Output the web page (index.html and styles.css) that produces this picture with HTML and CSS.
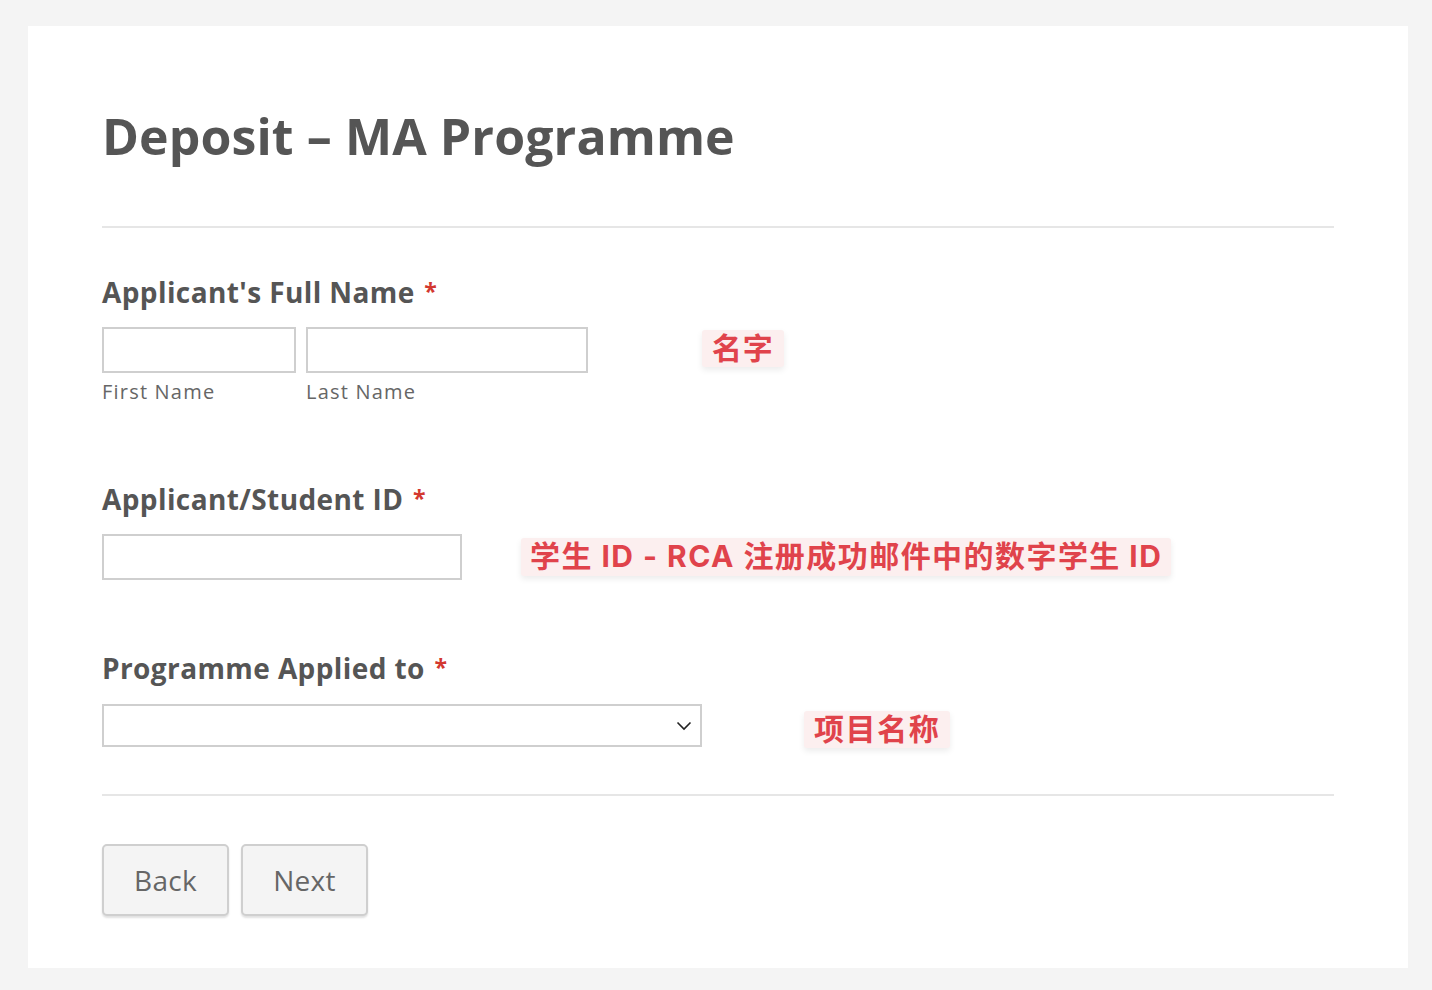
FILE: index.html
```html
<!DOCTYPE html>
<html lang="en">
<head>
<meta charset="utf-8">
<title>Deposit - MA Programme</title>
<link rel="stylesheet" href="styles.css">
</head>
<body>
<main class="card">
  <header class="form-header">
    <h1 class="form-title">Deposit – MA Programme</h1>
  </header>

  <section class="field field--name">
    <label class="field-label">Applicant's Full Name <span class="req">*</span></label>
    <div class="field-row">
      <div class="name-part">
        <input class="text-input text-input--first" type="text">
        <span class="sub-label">First Name</span>
      </div>
      <div class="name-part">
        <input class="text-input text-input--last" type="text">
        <span class="sub-label">Last Name</span>
      </div>
      <span class="note note--name">名字</span>
    </div>
  </section>

  <section class="field field--id">
    <label class="field-label">Applicant/Student ID <span class="req">*</span></label>
    <div class="field-row field-row--center">
      <input class="text-input text-input--id" type="text">
      <span class="note note--id">学生 ID - RCA 注册成功邮件中的数字学生 ID</span>
    </div>
  </section>

  <section class="field field--prog">
    <label class="field-label">Programme Applied to <span class="req">*</span></label>
    <div class="field-row field-row--center">
      <div class="select-box">
        <svg class="chevron" width="16" height="10" viewBox="0 0 16 10"><path d="M1.5 1.5 L8 8 L14.5 1.5" fill="none" stroke="#222" stroke-width="1.6"/></svg>
      </div>
      <span class="note note--prog">项目名称</span>
    </div>
  </section>

  <footer class="form-footer">
    <button class="btn" type="button">Back</button>
    <button class="btn" type="button">Next</button>
  </footer>
</main>
</body>
</html>
```

FILE: styles.css
```css
* { box-sizing: border-box; }

html, body {
  margin: 0;
  background: #f4f4f4;
}

body {
  padding: 26px 24px 22px 28px;
  font-family: "Open Sans", "DejaVu Sans", sans-serif;
  color: #555;
}

.card {
  background: #fff;
  height: 942px;
  padding: 0 74px;
}

.form-header {
  padding: 80px 0 60px;
  border-bottom: 2px solid #e6e6e6;
}

.form-title {
  margin: 0;
  font-size: 50px;
  line-height: 60px;
  font-weight: 700;
  color: #555;
  letter-spacing: 0.1px;
}

.field-label {
  display: block;
  font-size: 28px;
  line-height: 34px;
  font-weight: 700;
  color: #555;
  letter-spacing: 0.4px;
}

.req {
  color: #d3382f;
  margin-left: 2px;
  font-size: 23px;
  vertical-align: 3px;
}

.field--name { padding-top: 46px; }
.field--id { padding-top: 76px; }
.field--prog { padding-top: 70px; }

.field-row {
  display: flex;
  align-items: flex-start;
  margin-top: 18px;
}

.field-row--center { align-items: center; }

.name-part {
  display: flex;
  flex-direction: column;
  margin-right: 10px;
}

.text-input {
  display: block;
  height: 46px;
  border: 2px solid #cfcfcf;
  background: #fff;
  margin: 0;
  padding: 0;
}

.text-input--first { width: 194px; }
.text-input--last { width: 282px; }
.text-input--id { width: 360px; }

.sub-label {
  margin-top: 6px;
  font-size: 20px;
  line-height: 26px;
  color: #666;
  letter-spacing: 1.2px;
}

.select-box {
  width: 600px;
  height: 43px;
  border: 2px solid #cfcfcf;
  background: #fff;
  display: flex;
  align-items: center;
  justify-content: flex-end;
  padding-right: 8px;
}

.note {
  font-family: "Inter", "Noto Sans CJK SC", sans-serif;
  font-weight: 700;
  font-size: 30px;
  line-height: 37px;
  color: #e0434b;
  background: #fcefef;
  padding: 0 10px;
  border-radius: 3px;
  box-shadow: 0 3px 6px rgba(0, 0, 0, 0.08);
  white-space: nowrap;
  letter-spacing: 0.8px;
}

.note--name { margin-left: 104px; margin-top: 3px; }
.note--id { margin-left: 59px; padding: 0 9px 1px; letter-spacing: 1.45px; }
.note--prog { margin-left: 102px; margin-top: 8px; letter-spacing: 1.6px; }

.form-footer {
  margin-top: 46px;
  border-top: 2px solid #e6e6e6;
  padding-top: 48px;
  display: flex;
  gap: 12px;
}

.btn {
  font-family: "Open Sans", "DejaVu Sans", sans-serif;
  font-size: 28px;
  color: #666;
  background: #f4f4f4;
  border: 2px solid #cfcfcf;
  border-radius: 5px;
  box-shadow: 0 2px 2px rgba(0, 0, 0, 0.12);
  height: 72px;
  width: 127px;
  padding: 0;
  letter-spacing: 0.3px;
}
```
